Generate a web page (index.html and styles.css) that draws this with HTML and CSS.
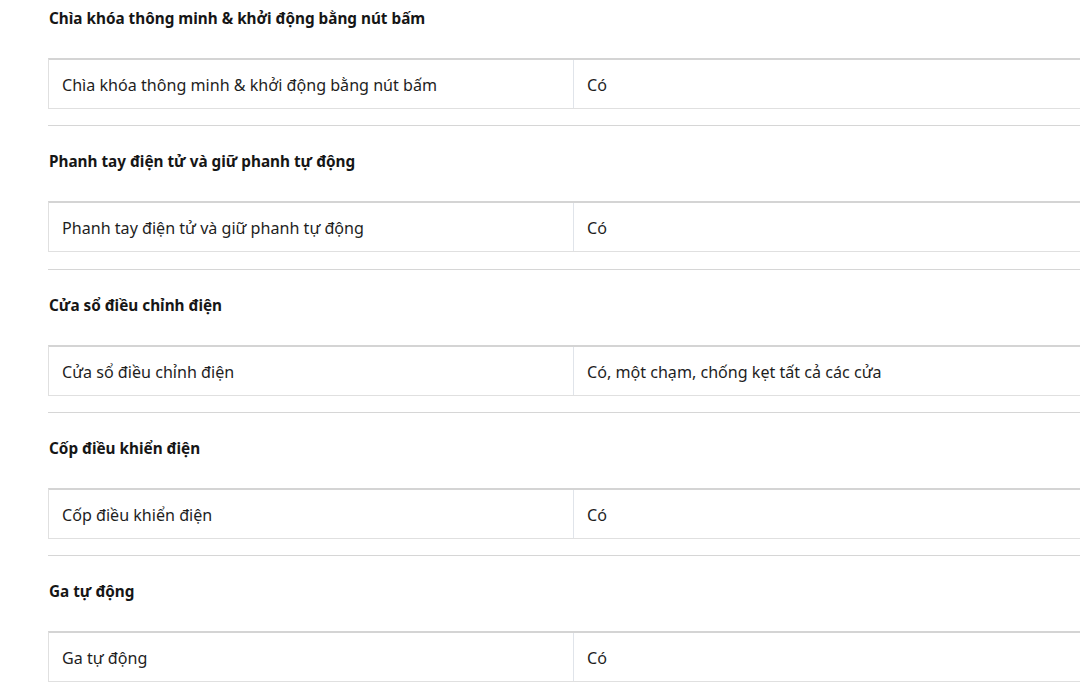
FILE: index.html
```html
<!DOCTYPE html>
<html lang="vi">
<head>
<meta charset="utf-8">
<link rel="stylesheet" href="styles.css">
</head>
<body>
<div class="page">
  <section class="spec first">
    <h3 class="spec-title">Chìa khóa thông minh &amp; khởi động bằng nút bấm</h3>
    <div class="spec-table">
      <div class="cell label">Chìa khóa thông minh &amp; khởi động bằng nút bấm</div>
      <div class="cell value">Có</div>
    </div>
  </section>
  <section class="spec">
    <h3 class="spec-title">Phanh tay điện tử và giữ phanh tự động</h3>
    <div class="spec-table">
      <div class="cell label">Phanh tay điện tử và giữ phanh tự động</div>
      <div class="cell value">Có</div>
    </div>
  </section>
  <section class="spec">
    <h3 class="spec-title">Cửa sổ điều chỉnh điện</h3>
    <div class="spec-table">
      <div class="cell label">Cửa sổ điều chỉnh điện</div>
      <div class="cell value">Có, một chạm, chống kẹt tất cả các cửa</div>
    </div>
  </section>
  <section class="spec">
    <h3 class="spec-title">Cốp điều khiển điện</h3>
    <div class="spec-table">
      <div class="cell label">Cốp điều khiển điện</div>
      <div class="cell value">Có</div>
    </div>
  </section>
  <section class="spec">
    <h3 class="spec-title">Ga tự động</h3>
    <div class="spec-table">
      <div class="cell label">Ga tự động</div>
      <div class="cell value">Có</div>
    </div>
  </section>
</div>
</body>
</html>
```
FILE: styles.css
```css
html, body {
  margin: 0;
  padding: 0;
  background: #ffffff;
  overflow: hidden;
}
.page {
  padding-left: 48px;
  font-family: "Noto Sans", "Open Sans", sans-serif;
  color: #1a1a1a;
}
.spec {
  padding-top: 25px;
  padding-bottom: 16.25px;
  border-bottom: 1px solid #d6d6d6;
}
.spec.first {
  padding-top: 8px;
}
.spec-title {
  margin: 0 0 30px 1px;
  font-size: 15.3px;
  line-height: 20px;
  font-weight: 700;
  color: #161616;
}
.spec-table {
  display: grid;
  grid-template-columns: 525px 1fr;
  border-top: 2px solid #d4d4d4;
  border-bottom: 1px solid #e0e0e0;
  border-left: 1px solid #e0e0e0;
  height: 48px;
}
.cell {
  display: flex;
  align-items: center;
  padding-top: 2px;
  font-size: 16.1px;
  color: #1e1e1e;
}
.label {
  padding-left: 13px;
  border-right: 1px solid #e0e4ea;
}
.value {
  padding-left: 13px;
}
```
